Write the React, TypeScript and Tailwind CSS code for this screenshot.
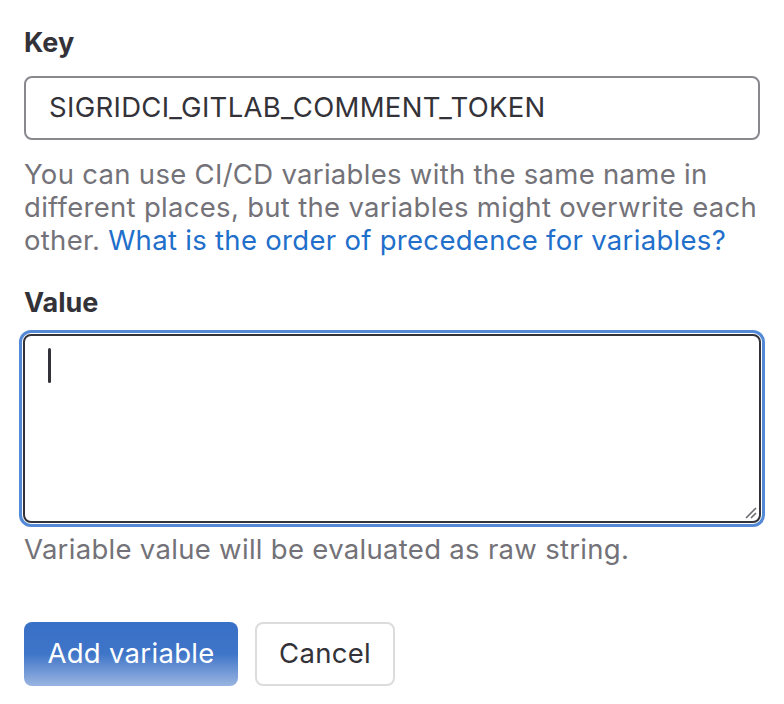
export default function App() {
  return (
    <div
      className="w-[784px] h-[704px] bg-white px-6 pt-[26px] text-[#333238]"
      style={{ fontFamily: 'Inter, "Noto Sans", sans-serif' }}
    >
      {/* Key */}
      <label className="block text-[27px] leading-[34px] font-bold">Key</label>
      <div className="mt-4 h-16 w-[736px] rounded-lg border-2 border-[#89888d] flex items-center px-[23px] text-[27.5px] tracking-[0.3px]">
        SIGRIDCI_GITLAB_COMMENT_TOKEN
      </div>
      <p className="mt-[18px] text-[27.5px] leading-[33px] tracking-[0.3px] text-[#737278]">
        You can use CI/CD variables with the same name in different places, but the variables might overwrite each
        other.{' '}
        <a href="#" className="text-[#1f6fcb]">
          What is the order of precedence for variables?
        </a>
      </p>

      {/* Value */}
      <label className="mt-[29px] block text-[27px] leading-[34px] font-bold">Value</label>
      <div className="mt-[10px] -mx-[5px] rounded-[12px] border-[3px] border-[#5489d6] p-[1px]">
        <div className="relative h-[189px] rounded-lg border-2 border-[#333238] bg-white">
          <div className="absolute left-[23px] top-[12px] h-[35px] w-[3px] rounded-full bg-[#333238]" />
          <svg className="absolute right-[2px] bottom-[2px]" width="14" height="14" viewBox="0 0 14 14">
            <path d="M13 3 L3 13 M13 8 L8 13" stroke="#6a6a6f" strokeWidth="1.6" />
          </svg>
        </div>
      </div>
      <p className="mt-[6px] text-[27.5px] leading-[33px] tracking-[0.3px] text-[#737278]">
        Variable value will be evaluated as raw string.
      </p>

      {/* Actions */}
      <div className="mt-[56px] flex gap-[17px]">
        <button className="h-16 w-[214px] rounded-lg bg-gradient-to-b from-[#3870c7] via-[#3f75c8] to-[#9ab4e0] text-[27.5px] tracking-[0.3px] text-white">
          Add variable
        </button>
        <button className="h-16 w-[140px] rounded-lg border-2 border-[#dcdcde] bg-white text-[27.5px] tracking-[0.3px] text-[#333238]">
          Cancel
        </button>
      </div>
    </div>
  );
}
